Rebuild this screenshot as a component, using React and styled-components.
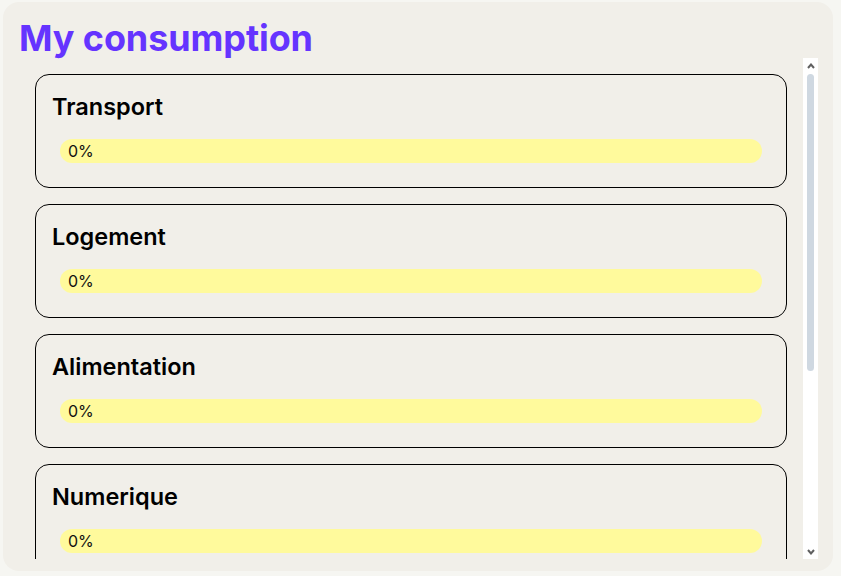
import React from "react";
import styled, { createGlobalStyle } from "styled-components";

const categories = [
  { name: "Transport", value: 0 },
  { name: "Logement", value: 0 },
  { name: "Alimentation", value: 0 },
  { name: "Numerique", value: 0 },
  { name: "Divers", value: 0 },
  { name: "Services publics", value: 0 },
];

const GlobalStyle = createGlobalStyle`
  html, body {
    margin: 0;
    padding: 0;
    background: #f6f6f2;
    font-family: Inter, "Noto Sans", sans-serif;
  }
`;

const Panel = styled.div`
  box-sizing: border-box;
  margin: 2px 8px 0 3px;
  height: 569px;
  background: #f1efe9;
  border-radius: 16px;
  display: flex;
  flex-direction: column;
`;

const Title = styled.h1`
  margin: 0;
  padding: 16px 16px 0 16px;
  font-size: 36px;
  line-height: 40px;
  font-weight: 700;
  color: #6534ff;
  letter-spacing: -0.1px;
`;

const ScrollArea = styled.div`
  flex: 1;
  min-height: 0;
  margin: 0 15px 12px 16px;
  display: flex;
`;

const List = styled.div`
  flex: 1;
  min-width: 0;
  padding: 16px;
  overflow-y: auto;
  display: flex;
  flex-direction: column;
  gap: 16px;
  scrollbar-width: none;
  &::-webkit-scrollbar {
    display: none;
  }
`;

const Track = styled.div`
  width: 15px;
  flex-shrink: 0;
  background: #fff;
  display: flex;
  flex-direction: column;
  align-items: center;
`;

const Arrow = styled.div`
  height: 15px;
  width: 15px;
  display: flex;
  align-items: center;
  justify-content: center;
  flex-shrink: 0;
`;

const ThumbSlot = styled.div`
  flex: 1;
  width: 100%;
  display: flex;
  justify-content: center;
`;

const Thumb = styled.div`
  width: 7px;
  margin-top: 1px;
  border-radius: 4px;
  background: #cfd8e1;
`;

const Card = styled.div`
  flex-shrink: 0;
  border: 1px solid #000;
  border-radius: 14px;
  padding: 16px 16px 24px;
  display: flex;
  flex-direction: column;
  gap: 16px;
`;

const CardTitle = styled.h2`
  margin: 0;
  font-size: 23.5px;
  line-height: 32px;
  font-weight: 600;
  color: #000;
`;

const Bar = styled.div`
  margin: 0 8px;
  height: 24px;
  border-radius: 12px;
  background: #fffa9c;
  padding: 0 8px;
  font-size: 16px;
  line-height: 24px;
  color: #111;
`;

const Chevron = ({ up }) => (
  <svg width="8" height="6" viewBox="0 0 8 6">
    <path
      d={up ? "M1 5 L4 1.5 L7 5" : "M1 1 L4 4.5 L7 1"}
      fill="none"
      stroke="#606060"
      strokeWidth="2"
    />
  </svg>
);

export default function App() {
  return (
    <>
      <GlobalStyle />
      <Panel>
        <Title>My consumption</Title>
        <ScrollArea>
          <List>
            {categories.map((c) => (
              <Card key={c.name}>
                <CardTitle>{c.name}</CardTitle>
                <Bar>{c.value}%</Bar>
              </Card>
            ))}
          </List>
          <Track>
            <Arrow>
              <Chevron up />
            </Arrow>
            <ThumbSlot>
              <Thumb style={{ height: "297px" }} />
            </ThumbSlot>
            <Arrow>
              <Chevron />
            </Arrow>
          </Track>
        </ScrollArea>
      </Panel>
    </>
  );
}
